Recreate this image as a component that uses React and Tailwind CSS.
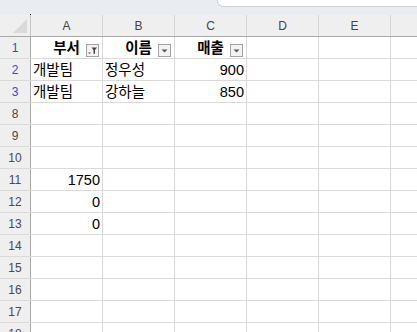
import React from "react";

const COLS = ["A", "B", "C", "D", "E"];

const ROWS = [
  { n: 1, blue: true, header: true },
  { n: 2, blue: true, cells: ["개발팀", "정우성", "900"] },
  { n: 3, blue: true, cells: ["개발팀", "강하늘", "850"] },
  { n: 8 },
  { n: 9 },
  { n: 10 },
  { n: 11, cells: ["1750"] },
  { n: 12, cells: ["0"] },
  { n: 13, cells: ["0"] },
  { n: 14 },
  { n: 15 },
  { n: 16 },
  { n: 17 },
  { n: 18 },
];

const HEADERS = [
  { label: "부서", filtered: true },
  { label: "이름" },
  { label: "매출" },
];

const isNumber = (v) => /^-?\d+(\.\d+)?$/.test(v);

function DropButton({ filtered }) {
  return (
    <div className="absolute right-[3px] bottom-[1px] w-[13px] h-[13px] border border-[#a3a3a3] bg-[#f3f3f3] flex items-center justify-center">
      {filtered ? (
        <svg width="11" height="11" viewBox="0 0 11 11">
          <path d="M1 7.5h3l-1.5 1.5z" fill="#555" />
          <path d="M4.5 2.5h5.5l-2 2.6v3.6h-1.5v-3.6z" fill="#444" />
        </svg>
      ) : (
        <svg width="11" height="11" viewBox="0 0 11 11">
          <path d="M2.5 4.5h6l-3 3z" fill="#555" />
        </svg>
      )}
    </div>
  );
}

function Cell({ value, children, last }) {
  const num = value && isNumber(value);
  return (
    <div
      className={`relative h-full shrink-0 border-r border-[#dadada] flex items-end leading-none pb-[3px] ${
        last ? "flex-1 border-r-0" : "w-[72px]"
      } ${num ? "justify-end pr-[2px]" : "justify-start pl-[2px]"}`}
    >
      {value && <span className="whitespace-nowrap">{value}</span>}
      {children}
    </div>
  );
}

export default function App() {
  return (
    <div
      className="w-[417px] h-[332px] overflow-hidden bg-white text-[#000] text-[14.5px]"
      style={{ fontFamily: '"Liberation Sans", "Noto Sans CJK KR", sans-serif' }}
    >
      {/* strip above the grid */}
      <div className="relative h-[15px] bg-[#e9edf1] flex justify-end">
        <div className="w-[205px] h-[7px] -mr-[5px] bg-white border-l border-b border-[#cfd3d6] rounded-bl-[6px]" />
        <div className="absolute left-[30px] top-[14px] w-[1px] h-[1px] bg-[#222]" />
      </div>

      {/* column letters */}
      <div className="flex h-[22px] bg-[#efefef] border-b border-[#a8a8a8]">
        <div className="w-[31px] shrink-0 h-full border-r border-[#c9c9c9] flex items-end justify-end pr-[2px] pb-[2px]">
          <svg width="15" height="15" viewBox="0 0 15 15">
            <path d="M14 0V14H0z" fill="#dadada" />
          </svg>
        </div>
        {COLS.map((c) => (
          <div
            key={c}
            className="w-[72px] shrink-0 h-full border-r border-[#d4d4d4] flex items-center justify-center pt-[1px] text-[12px] text-[#444]"
          >
            {c}
          </div>
        ))}
        <div className="flex-1" />
      </div>

      {/* sheet rows */}
      {ROWS.map((r) => (
        <div key={r.n} className="flex h-[22px] border-b border-[#dadada]">
          <div
            className={`w-[31px] shrink-0 h-full bg-[#efefef] border-r border-[#a8a8a8] flex items-end justify-center leading-none pb-[4px] text-[12px] ${
              r.blue ? "text-[#2b4ed6]" : "text-[#4a4a4a]"
            }`}
          >
            {r.n}
          </div>
          {r.header ? (
            <>
              {HEADERS.map((h) => (
                <div
                  key={h.label}
                  className="relative w-[72px] shrink-0 h-full border-r border-[#dadada] flex items-end justify-center leading-none pb-[3px] font-bold"
                >
                  <span>{h.label}</span>
                  <DropButton filtered={h.filtered} />
                </div>
              ))}
              <Cell />
              <Cell />
              <Cell last />
            </>
          ) : (
            <>
              {COLS.map((c, i) => (
                <Cell key={c} value={r.cells ? r.cells[i] : undefined} />
              ))}
              <Cell last />
            </>
          )}
        </div>
      ))}
    </div>
  );
}
